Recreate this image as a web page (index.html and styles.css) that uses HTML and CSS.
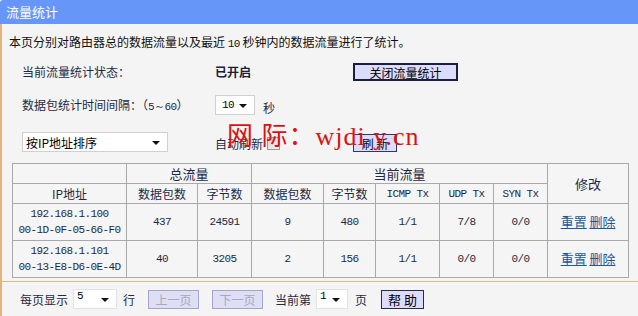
FILE: index.html
```html
<!DOCTYPE html>
<html lang="zh">
<head>
<meta charset="utf-8">
<link rel="stylesheet" href="styles.css">
</head>
<body>
<div class="titlebar">流量统计</div>
<div class="content">
  <p class="intro">本页分别对路由器总的数据流量以及最近 <span class="mono">10</span> 秒钟内的数据流量进行了统计。</p>
  <div class="form">
    <div class="row r1">
      <span>当前流量统计状态：</span>
      <b class="state">已开启</b>
      <span class="btn btn-strong">关闭流量统计</span>
    </div>
    <div class="row r2">
      <span>数据包统计时间间隔：（<span class="mono">5～60</span>）</span>
      <span class="inline"><span class="select sel-10"><span class="mono">10</span><i class="arrow"></i></span><span class="unit">秒</span></span>
      <span></span>
    </div>
    <div class="row r3">
      <span class="select sel-sort">按IP地址排序<i class="arrow"></i></span>
      <span class="inline auto">自动刷新<span class="check"></span></span>
      <span class="btn btn-small">刷 新</span>
    </div>
    <div class="watermark">网 际：wjdi y.cn</div>
  </div>
  <table class="stats">
    <colgroup>
      <col style="width:114px"><col style="width:71px"><col style="width:54px"><col style="width:72px"><col style="width:52px"><col style="width:64px"><col style="width:54px"><col style="width:54px"><col style="width:81px">
    </colgroup>
    <tr class="h1">
      <th></th>
      <th colspan="2">总流量</th>
      <th colspan="5">当前流量</th>
      <th rowspan="2">修改</th>
    </tr>
    <tr class="h2">
      <th>IP地址</th>
      <th>数据包数</th>
      <th>字节数</th>
      <th>数据包数</th>
      <th>字节数</th>
      <th class="mono">ICMP Tx</th>
      <th class="mono">UDP Tx</th>
      <th class="mono">SYN Tx</th>
    </tr>
    <tr class="d">
      <td class="mono">192.168.1.100<br>00-1D-0F-05-66-F0</td>
      <td class="mono">437</td>
      <td class="mono">24591</td>
      <td class="mono">9</td>
      <td class="mono">480</td>
      <td class="mono">1/1</td>
      <td class="mono">7/8</td>
      <td class="mono">0/0</td>
      <td><a href="#">重置</a> <a href="#">删除</a></td>
    </tr>
    <tr class="d">
      <td class="mono">192.168.1.101<br>00-13-E8-D6-0E-4D</td>
      <td class="mono">40</td>
      <td class="mono">3205</td>
      <td class="mono">2</td>
      <td class="mono">156</td>
      <td class="mono">1/1</td>
      <td class="mono">0/0</td>
      <td class="mono">0/0</td>
      <td><a href="#">重置</a> <a href="#">删除</a></td>
    </tr>
  </table>
</div>
<div class="footer">
  <span>每页显示</span>
  <span class="select sel-5"><span class="mono">5</span><i class="arrow"></i></span>
  <span>行</span>
  <span class="btn btn-off">上一页</span>
  <span class="btn btn-off">下一页</span>
  <span>当前第</span>
  <span class="select sel-1"><span class="mono">1</span><i class="arrow"></i></span>
  <span>页</span>
  <span class="btn btn-help">帮 助</span>
</div>
</body>
</html>
```

FILE: styles.css
```css
html, body {
  margin: 0;
  padding: 0;
  background: #f4f4f4;
  font-family: "Noto Sans CJK SC", "Liberation Sans", sans-serif;
  font-size: 12px;
  color: #1c1c1c;
  width: 638px;
  height: 316px;
  overflow: hidden;
}
.mono {
  font-family: "Liberation Mono", "DejaVu Sans Mono", monospace;
  font-size: 11px;
  letter-spacing: -0.6px;
}
.titlebar {
  height: 24px;
  line-height: 24px;
  background: #6697f8;
  color: #fff;
  font-size: 13px;
  padding-left: 6px;
  border-top-left-radius: 3px;
}
.content {
  border-left: 2px solid #e3b57c;
  padding-top: 9px;
  height: 257px;
  box-sizing: border-box;
  position: relative;
}
.intro {
  margin: 0;
  padding-left: 7px;
  height: 18px;
  line-height: 18px;
  color: #111;
}
.form {
  position: relative;
  padding-left: 20px;
}
.row {
  display: grid;
  grid-template-columns: 193px 138px auto;
  align-items: center;
  height: 20px;
}
.r1 { margin-top: 10px; color: #1e2a44; }
.r2 { margin-top: 12px; color: #1e2a44; }
.r3 { margin-top: 19px; color: #1e2a44; }
.state {
  font-weight: bold;
  color: #1a2038;
}
.inline {
  display: flex;
  align-items: center;
}
.select {
  position: relative;
  display: inline-flex;
  align-items: center;
  height: 20px;
  box-sizing: border-box;
  background: #fff;
  border: 1px solid #d0d0d0;
  padding-left: 6px;
  color: #000;
}
.arrow {
  position: absolute;
  right: 7px;
  top: 8px;
  width: 0;
  height: 0;
  border-left: 4px solid transparent;
  border-right: 4px solid transparent;
  border-top: 4px solid #111;
}
.sel-10 { width: 40px; }
.sel-sort { width: 146px; padding-left: 3px; }
.unit { margin-left: 8px; margin-top: 6px; }
.auto { padding-top: 2px; }
.check {
  display: inline-block;
  width: 11px;
  height: 11px;
  margin-left: 4px;
  border: 1px solid #9a9a9a;
  background: linear-gradient(135deg, #d4d4d4, #f4f4f4);
}
.btn {
  display: inline-flex;
  align-items: center;
  justify-content: center;
  box-sizing: border-box;
  background: #dcdcfc;
  color: #000;
}
.btn-strong {
  width: 105px;
  height: 18px;
  border: 2px solid #1c1c3c;
  margin-top: 2px;
}
.btn-small {
  width: 44px;
  height: 18px;
  border: 1px solid #36365a;
  margin-top: 2px;
}
.watermark {
  position: absolute;
  left: 225px;
  top: 54px;
  font-family: "Liberation Serif", "Noto Sans CJK SC", serif;
  font-size: 26px;
  letter-spacing: 1px;
  color: #e01010;
  pointer-events: none;
}
.stats {
  margin-top: 11px;
  margin-left: 10px;
  border-collapse: collapse;
  table-layout: fixed;
  width: 616px;
  color: #1e2a44;
}
.stats th, .stats td {
  border: 1px solid #a9a9a9;
  text-align: center;
  font-weight: normal;
  padding: 0;
  background: #f5f5f5;
}
.stats .h1 th, .stats .h2 th { height: 19px; }
.stats .h1 th { font-size: 13px; }
.stats .d td { height: 36px; line-height: 16px; }
.stats .mono { font-size: 11px; }
.stats a {
  color: #1b5a9c;
  text-decoration: underline;
  font-size: 13px;
}
.footer {
  border-top: 1px solid #e8b87a;
  border-left: 2px solid #e3b57c;
  height: 35px;
  box-sizing: border-box;
  display: flex;
  align-items: center;
  padding-left: 18px;
  padding-bottom: 6px;
  padding-top: 6px;
  color: #1e2a44;
}
.footer .select { height: 20px; border-color: #e2e2e2; padding-left: 3px; align-items: flex-start; }
.sel-5 { width: 44px; margin-left: 5px; margin-right: 6px; }
.sel-1 { width: 32px; margin-left: 5px; margin-right: 7px; }
.btn-off {
  width: 51px;
  height: 19px;
  border: 1px solid #a4a4c8;
  color: #a8a8c0;
  background: #dedef4;
  margin-left: 13px;
}
.btn-off + .btn-off { margin-left: 13px; }
.btn-off + .btn-off + span { margin-left: 12px; }
.btn-help {
  width: 43px;
  height: 19px;
  border: 1px solid #2a2a4a;
  margin-left: 14px;
  font-size: 13px;
}
```
